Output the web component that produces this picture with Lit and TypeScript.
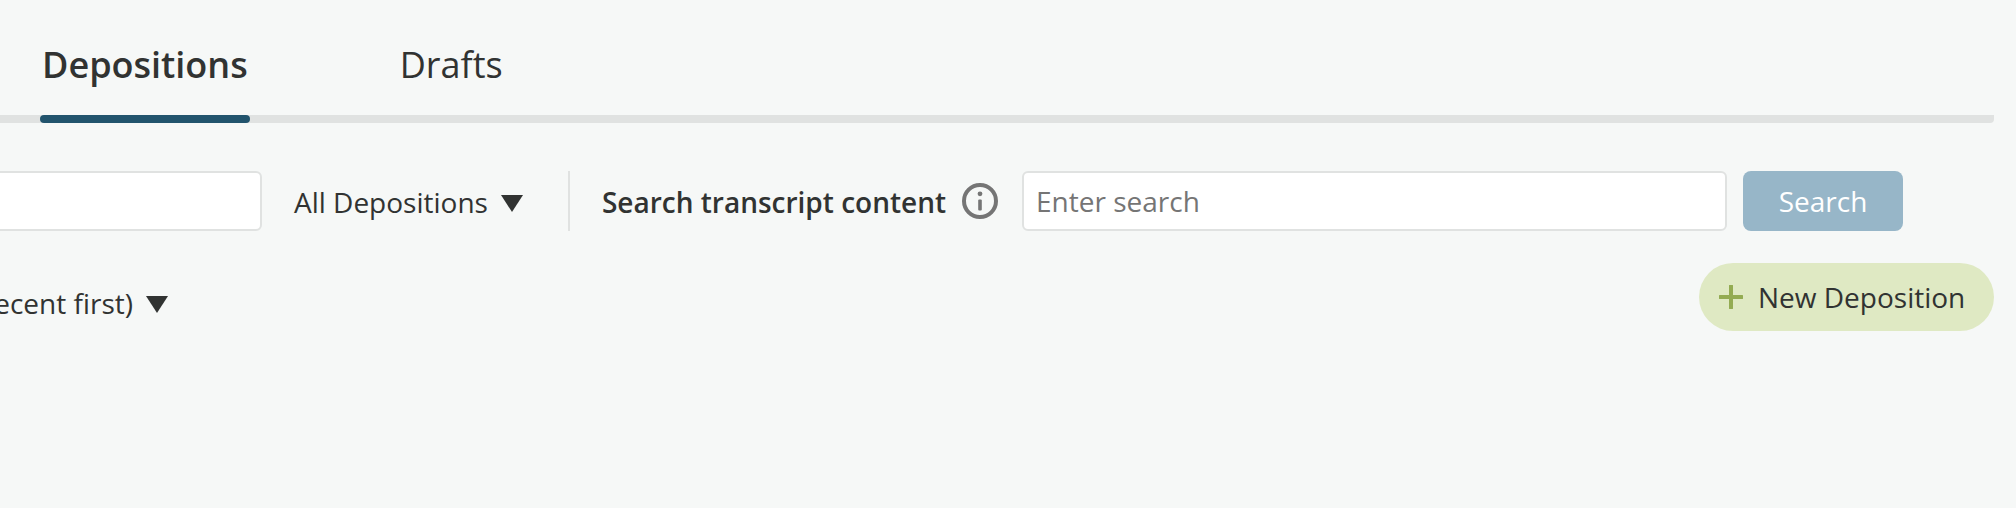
import { LitElement, html, css } from "lit";
import { customElement } from "lit/decorators.js";

@customElement("app-root")
export class AppRoot extends LitElement {
  static styles = css`
    :host { display: block; width: 2016px; height: 508px; background: #f6f8f7; overflow: hidden; font-family: "Open Sans", sans-serif; color: #313332; }
    * { box-sizing: border-box; }
    .tabs { display: flex; height: 123px; padding-right: 22px; }
    .tablist { flex: 1; display: flex; gap: 148px; padding-left: 40px; border-bottom: 8px solid #e0e2e1; border-bottom-right-radius: 4px; height: 123px; }
    .tab { height: 123px; padding: 42px 2px 0; font-size: 36px; line-height: 46px; white-space: nowrap; }
    .tab.active { font-weight: 600; position: relative; }
    .tab.active::after { content: ""; position: absolute; left: 0; right: 0; bottom: 0; height: 8px; background: #22546d; border-radius: 4px; }
    .filters { display: flex; justify-content: flex-end; align-items: center; height: 60px; margin-top: 48px; padding-right: 113px; }
    .input { height: 60px; background: #fff; border: 2px solid #e0e2e1; border-radius: 6px; flex: none; }
    .left-input { width: 400px; }
    .select { display: flex; align-items: center; gap: 13px; font-size: 28px; white-space: nowrap; margin-left: 32px; flex: none; padding-top: 2px; }
    .tri { width: 0; height: 0; border-left: 11px solid transparent; border-right: 11px solid transparent; border-top: 17px solid #313332; flex: none; margin-top: 2px; }
    .divider { width: 2px; height: 60px; background: #e0e2e1; margin-left: 45px; flex: none; }
    .label { font-size: 28px; font-weight: 600; white-space: nowrap; margin-left: 32px; flex: none; padding-top: 2px; }
    .info { margin-left: 16px; width: 36px; height: 36px; flex: none; display: block; }
    .search-input { width: 705px; margin-left: 24px; padding: 0 12px; font-size: 28px; line-height: 56px; color: #757575; }
    .btn { width: 160px; height: 60px; margin-left: 16px; border-radius: 8px; background: #97b6c8; color: #fff; font-size: 28px; display: flex; align-items: center; justify-content: center; flex: none; }
    .row2 { display: flex; justify-content: flex-end; align-items: flex-start; margin-top: 32px; padding-right: 22px; }
    .sort { display: flex; align-items: center; gap: 13px; font-size: 28px; white-space: nowrap; height: 68px; flex: none; padding-top: 12px; }
    .spacer { width: 1531px; flex: none; }
    .new { width: 295px; height: 68px; border-radius: 34px; background: #dfe9c3; display: flex; align-items: center; gap: 15px; padding-left: 20px; font-size: 28px; white-space: nowrap; flex: none; }
    .plus { width: 24px; height: 24px; flex: none; display: block; }
  `;

  render() {
    return html`
      <div class="tabs">
        <div class="tablist">
          <div class="tab active">Depositions</div>
          <div class="tab">Drafts</div>
        </div>
      </div>
      <div class="filters">
        <div class="input left-input"></div>
        <div class="select">All Depositions <span class="tri"></span></div>
        <div class="divider"></div>
        <div class="label">Search transcript content</div>
        <svg class="info" viewBox="0 0 36 36" fill="none">
          <circle cx="18" cy="18" r="16" stroke="#757575" stroke-width="4"/>
          <rect x="16.2" y="16.5" width="3.6" height="11" rx="1" fill="#757575"/>
          <circle cx="18" cy="10.8" r="2.4" fill="#757575"/>
        </svg>
        <div class="input search-input">Enter search</div>
        <div class="btn">Search</div>
      </div>
      <div class="row2">
        <div class="sort">Date (Most recent first) <span class="tri"></span></div>
        <div class="spacer"></div>
        <div class="new">
          <svg class="plus" viewBox="0 0 24 24" fill="none"><path d="M12 1v22M1 12h22" stroke="#93ab52" stroke-width="4" stroke-linecap="round"/></svg>
          New Deposition
        </div>
      </div>
    `;
  }
}
